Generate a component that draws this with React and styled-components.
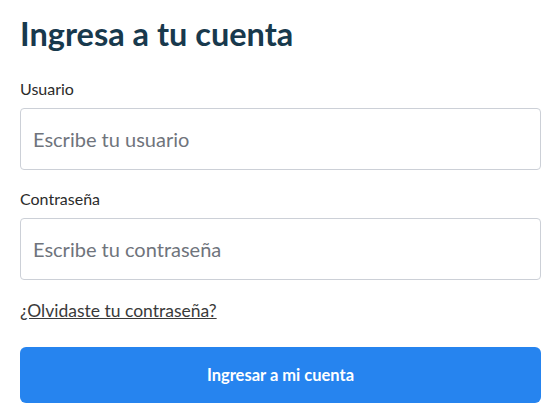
import React from 'react';
import styled, { createGlobalStyle } from 'styled-components';

const GlobalStyle = createGlobalStyle`
  body {
    margin: 0;
    background: #ffffff;
    font-family: Lato, "Open Sans", sans-serif;
  }
`;

const Page = styled.main`
  padding: 14px 18px 0 20px;
`;

const Title = styled.h1`
  margin: 0 0 26px;
  font-size: 32.5px;
  line-height: 40px;
  font-weight: 700;
  color: #18394d;
`;

const Form = styled.form`
  display: flex;
  flex-direction: column;
`;

const Field = styled.div`
  display: flex;
  flex-direction: column;
  gap: 10px;
  margin-bottom: 20px;
`;

const Label = styled.label`
  font-size: 16px;
  line-height: 18px;
  color: #2b2b2b;
`;

const Input = styled.input`
  box-sizing: border-box;
  height: 62px;
  width: 100%;
  padding: 0 12px;
  border: 1px solid #ccd0d7;
  border-radius: 4px;
  font-family: inherit;
  font-size: 20px;
  color: #333;

  &::placeholder {
    color: #6f747c;
  }
`;

const ForgotLink = styled.a`
  align-self: flex-start;
  font-size: 17.5px;
  line-height: 22px;
  color: #3a3a3a;
  text-decoration: underline;
`;

const Submit = styled.button`
  margin-top: 25px;
  height: 56px;
  border: none;
  border-radius: 6px;
  background: #2684ef;
  color: #ffffff;
  font-family: inherit;
  font-size: 16.5px;
  font-weight: 700;
`;

export default function App() {
  return (
    <>
      <GlobalStyle />
      <Page>
        <Title>Ingresa a tu cuenta</Title>
        <Form onSubmit={(e) => e.preventDefault()}>
          <Field>
            <Label htmlFor="user">Usuario</Label>
            <Input id="user" placeholder="Escribe tu usuario" />
          </Field>
          <Field>
            <Label htmlFor="pass">Contraseña</Label>
            <Input id="pass" type="password" placeholder="Escribe tu contraseña" />
          </Field>
          <ForgotLink href="#">¿Olvidaste tu contraseña?</ForgotLink>
          <Submit type="submit">Ingresar a mi cuenta</Submit>
        </Form>
      </Page>
    </>
  );
}
